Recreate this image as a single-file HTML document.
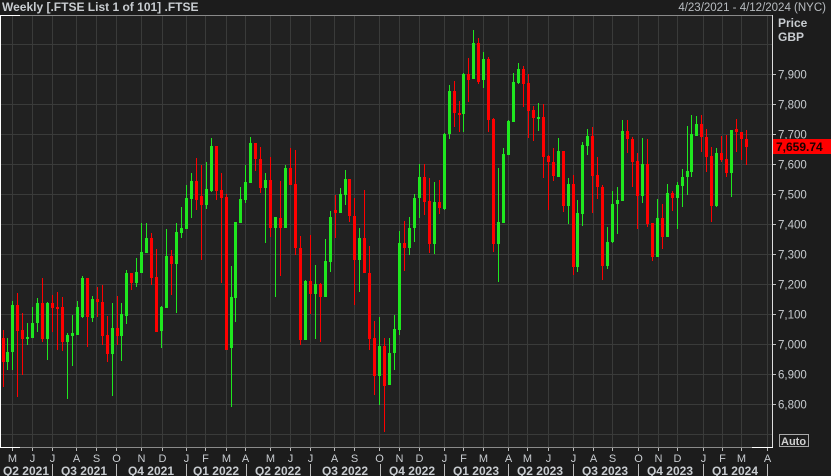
<!DOCTYPE html>
<html><head><meta charset="utf-8"><style>
html,body{margin:0;padding:0;background:#1c1c1c;width:831px;height:476px;overflow:hidden;font-family:"Liberation Sans",Arial,sans-serif}
svg{position:absolute;left:0;top:0}
</style></head><body>
<svg id="s" width="831" height="476" xmlns="http://www.w3.org/2000/svg">
<rect x="0" y="0" width="831" height="476" fill="#1c1c1c"/>
<rect x="1" y="16" width="771" height="431" fill="#212121"/>
<g id="grid" stroke="#3a3b3a" stroke-width="1"></g>
<g id="c"></g>
<line x1="0" y1="15.5" x2="772" y2="15.5" stroke="#8a8a8a"/>
<line x1="0" y1="15.5" x2="20" y2="15.5" stroke="#fff"/>
<line x1="0.5" y1="15" x2="0.5" y2="447" stroke="#fff"/>
<line x1="772.5" y1="15" x2="772.5" y2="447" stroke="#ddd"/>
<line x1="0" y1="447.5" x2="772" y2="447.5" stroke="#8a8a8a"/>
<line x1="0" y1="447.5" x2="20" y2="447.5" stroke="#fff"/>
<line x1="752" y1="447.5" x2="773" y2="447.5" stroke="#fff"/>
<g font-size="12" fill="#c8ccd0" font-weight="bold">
<text x="2" y="11">Weekly [.FTSE List 1 of 101] .FTSE</text>
<text x="778" y="27">Price</text>
<text x="778" y="41">GBP</text>
</g>
<text x="826" y="11" font-size="11.5" fill="#b8bcc0" text-anchor="end">4/23/2021 - 4/12/2024 (NYC)</text>
<g id="ax" font-size="11.5" fill="#c8ccd0"></g>
<rect x="773" y="139" width="58" height="15" fill="#ff0000"/>
<text x="776" y="151" font-size="12" font-weight="bold" fill="#1a0000">7,659.74</text>
<rect x="779.5" y="434.5" width="29" height="12" fill="none" stroke="#aaa"/>
<text x="781" y="445" font-size="11" font-weight="bold" fill="#d0d0d0">Auto</text>
<g id="mx" font-size="11" fill="#c8ccd0" text-anchor="middle"></g>
</svg>
<script>
var NS="http://www.w3.org/2000/svg";
function el(p,t,a,txt){var e=document.createElementNS(NS,t);for(var k in a)e.setAttribute(k,a[k]);if(txt)e.textContent=txt;document.getElementById(p).appendChild(e);}
// horizontal grid
for(var y=44;y<=434;y+=30){el("grid","line",{x1:1,x2:772,y1:y+.5,y2:y+.5});}
var ticks=[12,32,52,76,96,116,141,162,186,205,226,245,270,290,310,334,354,379,399,419,444,463,483,508,527,548,573,593,612,638,658,677,703,722,741,767];
var mon="MJJASONDJFMAMJJASONDJFMAMJJASONDJFMA".split("");
mon=["M","J","J","A","S","O","N","D","J","F","M","A","M","J","J","A","S","O","N","D","J","F","M","A","M","J","J","A","S","O","N","D","J","F","M","A"];
for(var i=0;i<ticks.length;i++){var x=ticks[i];
 if(x<772)el("grid","line",{x1:x+.5,x2:x+.5,y1:16,y2:447});
 el("grid","line",{x1:x+.5,x2:x+.5,y1:448,y2:451,stroke:"#bbb"});
 el("mx","text",{x:x+.5,y:462},mon[i]);}
var seps=[52,116,186,246,310,380,444,508,573,638,703,767];
for(var i=0;i<seps.length;i++)el("grid","line",{x1:seps[i]+.5,x2:seps[i]+.5,y1:464,y2:476,stroke:"#bbb"});
var q=["Q2 2021","Q3 2021","Q4 2021","Q1 2022","Q2 2022","Q3 2022","Q4 2022","Q1 2023","Q2 2023","Q3 2023","Q4 2023","Q1 2024"];
var qx=[26,84,151,216,278,345,412,476,540,605,670,735];
for(var i=0;i<q.length;i++)el("mx","text",{x:qx[i],y:475,"font-weight":"bold","font-size":"12"},q[i]);
// price axis
for(var p=7900;p>=6800;p-=100){var y=74+(7900-p)*0.3;
 el("grid","line",{x1:772,x2:776,y1:y+.5,y2:y+.5,stroke:"#bbb"});
 if(p!=7700||true){ if(Math.abs(y-146)>8) el("ax","text",{x:778,y:y+4.5},(p+"").replace(/(\d)(\d{3})$/,"$1,$2"));}}
// candles [wt,wb,bt,bb,g]
var d=[
[330,387,338,362,0],[338,370,352,362,1],[301,370,305,352,1],[293,397,305,331,0],[313,375,330,339,0],[323,345,337,339,1],[307,338,323,338,1],[298,332,303,323,1],[278,342,303,339,0],[302,360,303,339,1],
[295,332,303,308,0],[292,350,307,308,0],[297,351,307,342,0],[333,399,335,342,1],[315,366,333,336,1],[301,335,307,335,1],[276,318,278,317,1],[278,347,278,317,0],[296,322,299,318,1],[287,317,299,302,0],
[285,345,302,336,0],[316,362,335,354,0],[303,396,328,354,1],[296,345,328,336,0],[303,361,314,336,1],[270,324,273,316,1],[273,290,273,283,0],[258,287,272,283,1],[223,273,252,273,1],[223,253,238,253,1],
[233,285,238,278,0],[249,332,277,332,0],[306,348,307,331,1],[229,308,256,308,1],[250,295,256,264,0],[223,313,232,264,1],[207,238,228,233,1],[185,229,198,229,1],[173,218,181,199,1],[158,210,181,200,0],
[165,260,196,205,0],[162,209,189,205,1],[138,192,146,191,1],[146,200,146,191,0],[173,283,190,198,0],[194,350,197,350,0],[266,407,297,348,1],[222,322,222,298,1],[187,223,199,223,1],[165,203,182,200,1],
[137,183,143,183,1],[143,171,143,159,0],[147,193,159,188,0],[173,243,180,188,1],[157,237,180,228,0],[217,297,217,228,1],[181,276,218,228,0],[165,228,168,228,1],[148,185,168,185,0],[150,255,184,248,0],
[236,345,248,340,0],[280,340,281,340,1],[235,314,281,294,0],[265,339,284,294,1],[283,342,284,297,0],[239,297,261,297,1],[211,272,217,262,1],[195,238,210,213,0],[188,213,194,213,1],[170,205,179,195,1],
[179,222,179,216,0],[198,305,216,260,0],[228,292,238,260,1],[190,273,238,273,0],[246,350,273,339,0],[321,395,338,376,0],[317,405,346,376,1],[338,432,346,386,0],[338,385,353,385,1],[315,370,329,353,1],
[231,335,243,330,1],[221,271,243,248,0],[217,255,228,248,1],[194,242,198,228,1],[164,218,177,198,1],[164,215,177,202,0],[178,253,201,244,0],[182,254,202,244,1],[180,214,202,208,0],[133,210,134,209,1],
[85,139,91,134,1],[81,127,91,113,0],[101,132,113,115,0],[73,132,74,114,1],[58,102,74,80,0],[30,79,43,79,1],[38,84,43,82,0],[52,88,59,80,1],[57,132,59,120,0],[118,252,119,244,0],
[168,282,222,244,1],[148,223,154,223,1],[120,155,121,155,1],[73,122,82,122,1],[63,84,69,83,1],[66,107,69,84,0],[74,138,83,111,0],[106,141,110,118,0],[103,131,117,119,1],[104,178,117,157,0],
[155,210,156,162,0],[148,181,162,176,0],[138,177,151,177,1],[151,212,151,206,0],[178,224,184,206,1],[175,275,184,267,0],[200,272,213,267,1],[142,226,145,214,1],[129,155,136,146,1],[127,213,136,176,0],
[157,199,175,187,0],[185,280,187,266,0],[227,269,242,266,1],[191,243,204,242,1],[187,234,200,204,1],[120,201,131,201,1],[120,153,131,139,0],[137,187,139,162,0],[153,229,161,196,0],[138,203,164,196,1],
[139,227,164,224,0],[223,261,223,257,0],[199,257,218,257,1],[204,249,218,237,0],[184,237,193,237,1],[191,211,193,198,0],[182,229,185,198,1],[169,207,177,186,1],[126,195,171,177,1],[115,177,134,172,1],
[116,136,124,136,1],[115,152,124,137,0],[129,172,137,157,0],[147,222,156,206,0],[148,207,153,206,1],[136,162,153,160,0],[135,177,159,173,0],[130,197,130,173,1],[119,152,129,132,0],[132,160,132,139,0],
[130,165,139,147,0]];
var n=d.length,step=(746-2.5)/(n-1);
for(var i=0;i<n;i++){var c=d[i],x=Math.round(2.5+i*step),col=c[4]?"#1fe81f":"#ff0000";
 el("c","rect",{x:x,y:c[0],width:1,height:c[1]-c[0],fill:col});
 el("c","rect",{x:x-1,y:c[2],width:3,height:Math.max(2,c[3]-c[2]),fill:col});}
</script>
</body></html>
